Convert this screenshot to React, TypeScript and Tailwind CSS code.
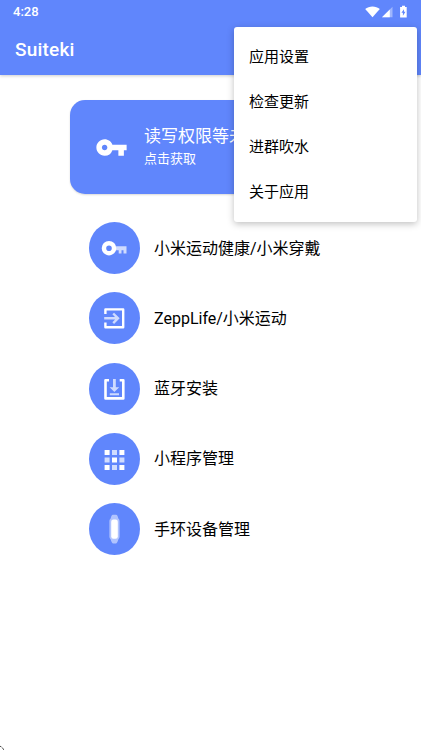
import type { ReactNode } from "react";

const menuItems = ["应用设置", "检查更新", "进群吹水", "关于应用"];

function Icon({ children }: { children: ReactNode }) {
  return (
    <svg width="28" height="28" viewBox="0 0 28 28" fill="currentColor" className="mr-px">
      {children}
    </svg>
  );
}

const entries = [
  {
    label: "小米运动健康/小米穿戴",
    icon: (
      <Icon>
        <path opacity=".7" d="M15.5 12.2h11v7.3h-3v-3.2h-2v3.2h-2.8v-3.2h-3.2z" />
        <path
          fillRule="evenodd"
          d="M9 6.9a7.3 7.3 0 1 0 0 14.6 7.3 7.3 0 0 0 0-14.6zm0 4.5a2.8 2.8 0 1 1 0 5.6 2.8 2.8 0 0 1 0-5.6z"
        />
      </Icon>
    ),
  },
  {
    label: "ZeppLife/小米运动",
    icon: (
      <Icon>
        <path
          d="M5.4 10V5.4h17.8v17.8H5.4V18.6"
          fill="none"
          stroke="currentColor"
          strokeWidth="2.4"
          strokeLinejoin="round"
        />
        <path
          opacity=".7"
          d="M4.2 14.3h13.6M13.2 9.5l4.8 4.8-4.8 4.8"
          fill="none"
          stroke="currentColor"
          strokeWidth="2.4"
        />
      </Icon>
    ),
  },
  {
    label: "蓝牙安装",
    icon: (
      <Icon>
        <path
          d="M9 5.2H5.5v18.2h17.8V5.2h-3.6"
          fill="none"
          stroke="currentColor"
          strokeWidth="2.6"
          strokeLinejoin="round"
        />
        <path
          opacity=".7"
          d="M13 4h2.8v8.3h3.4L14.4 17l-4.8-4.7H13zM9.8 18.2H19v2H9.8z"
        />
      </Icon>
    ),
  },
  {
    label: "小程序管理",
    icon: (
      <Icon>
        <path d="M4.6 5h5v5h-5zM19.4 5h5v5h-5zM12 12.5h5v5h-5zM4.6 20h5v5h-5zM19.4 20h5v5h-5z" />
        <path
          opacity=".7"
          d="M12 5h5v5h-5zM4.6 12.5h5v5h-5zM19.4 12.5h5v5h-5zM12 20h5v5h-5z"
        />
      </Icon>
    ),
  },
  {
    label: "手环设备管理",
    icon: (
      <svg width="28" height="32" viewBox="0 0 28 32" fill="currentColor" className="mr-px">
        <path
          opacity=".5"
          d="M12.9 1.8h3.2c1 0 1.8 1.7 2.2 3.6.9.7 1.3 1.6 1.3 2.8v15.4c0 1.2-.4 2.1-1.3 2.8-.5 2-1.5 4.2-2.5 4.2h-2.6c-1 0-2-2.2-2.5-4.2-.9-.7-1.3-1.6-1.3-2.8V8.2c0-1.2.4-2.1 1.3-2.8.4-1.9 1.2-3.6 2.2-3.6z"
        />
        <rect x="11.2" y="6.5" width="6.6" height="19.3" rx="2.2" />
      </svg>
    ),
  },
];

function StatusBar() {
  return (
    <div className="flex h-6 items-center justify-between pr-3.5 pl-[13px]">
      <span className="text-[13px] font-medium">4:28</span>
      <svg width="43" height="14" viewBox="0 0 43 14" fill="currentColor" className="mb-px">
        <path d="M1.2 4C5 .5 12 .5 15.8 4l-7.3 8.3z" />
        <path opacity=".4" d="M18 12.3L28.5 1.8v10.5z" />
        <path d="M18 12.3l7.8-7.8v7.8z" />
        <path
          fillRule="evenodd"
          d="M38 .7h3v1.2h1.7v10.6h-6.6V1.9H38zM40 4.2l-2.6 3.6h1.5v2.9l2.6-3.9H40z"
        />
      </svg>
    </div>
  );
}

export default function App() {
  return (
    <div className="relative h-[750px] w-full overflow-hidden bg-white font-[Roboto,'Noto_Sans_CJK_SC',sans-serif] text-black">
      <header className="h-[75px] bg-[#6086fc] text-white shadow-[0_1px_3px_rgba(0,0,0,0.2)]">
        <StatusBar />
        <h1 className="pt-3 pl-[15px] text-[19px] leading-[28px] font-medium tracking-[0.2px]">
          Suiteki
        </h1>
      </header>

      <main>
        <section className="mx-[70px] mt-[25px] flex h-[94px] items-center overflow-hidden rounded-[15px] bg-[#6086fc] pl-[25px] text-white shadow-[0_1px_2px_rgba(0,0,0,0.15)]">
          <svg width="33" height="33" viewBox="0 0 24 24" fill="currentColor" className="shrink-0">
            <path d="M12.65 10C11.83 7.67 9.61 6 7 6c-3.31 0-6 2.69-6 6s2.69 6 6 6a5.99 5.99 0 0 0 5.65-4H17v4h4v-4h2v-4H12.65zM7 14c-1.1 0-2-.9-2-2s.9-2 2-2 2 .9 2 2-.9 2-2 2z" />
          </svg>
          <div className="ml-4 whitespace-nowrap">
            <p className="text-[17px] leading-6">读写权限等未</p>
            <p className="text-[13px] leading-[22px]">点击获取</p>
          </div>
        </section>

        <ul className="mt-7 ml-[89px] flex flex-col gap-[18.3px]">
          {entries.map((entry) => (
            <li key={entry.label} className="flex h-[52px] items-center">
              <span className="flex h-[52px] w-[51px] items-center justify-center rounded-[50%] bg-[#6086fc] text-white">
                {entry.icon}
              </span>
              <span className="ml-3.5 pt-px text-[16px]">{entry.label}</span>
            </li>
          ))}
        </ul>
      </main>

      <ul className="absolute top-[27px] right-1 h-[195px] w-[183px] rounded-[3px] bg-white py-[7.5px] shadow-[0_2px_7px_rgba(0,0,0,0.25)]">
        {menuItems.map((item) => (
          <li key={item} className="flex h-[45px] items-center pl-[15px] text-[15px]">
            {item}
          </li>
        ))}
      </ul>

      <svg className="absolute bottom-0 left-0" width="5" height="5" viewBox="0 0 5 5">
        <path d="M0 .8l1.5 1.5M2.3 3l1.7 1.7" stroke="#222" />
      </svg>
    </div>
  );
}
